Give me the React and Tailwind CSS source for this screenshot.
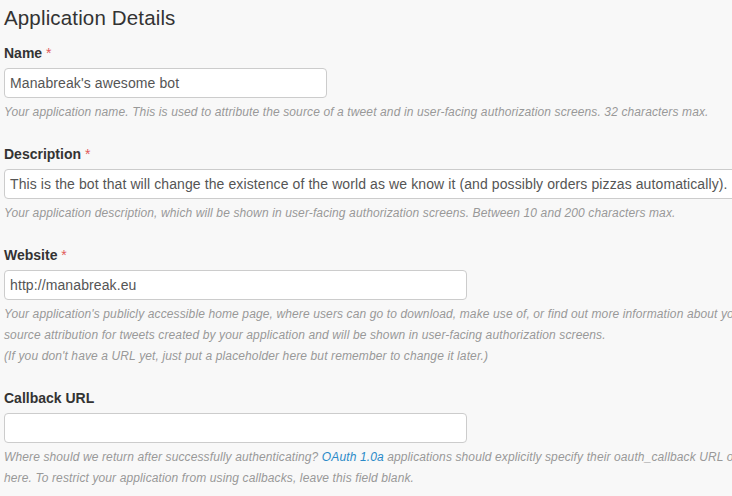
export default function App() {
  const font = { fontFamily: '"Liberation Sans", Arial, sans-serif' };
  const Label = ({ children, req }) => (
    <div className="text-[14px] leading-[20px] font-bold text-[#333] mb-[5px]">
      {children}
      {req && <span className="text-[#e05a5a] font-normal"> *</span>}
    </div>
  );
  const Input = ({ w, value }) => (
    <div
      className={`${w} h-[30px] shrink-0 bg-white border border-[#cccccc] rounded-[4px] px-[5px] flex items-center text-[14px] tracking-[0.1px] text-[#555] whitespace-nowrap overflow-hidden`}
    >
      {value}
    </div>
  );
  const Help = ({ children }) => (
    <div className="mt-[4px] text-[12px] leading-[21px] tracking-[0.12px] italic text-[#999] whitespace-nowrap">
      {children}
    </div>
  );
  return (
    <div
      style={font}
      className="w-[732px] h-[496px] overflow-hidden bg-[#f8f8f8] pl-[4px] pt-[6px] flex flex-col"
    >
      <h3 className="text-[20.5px] leading-[24px] tracking-[0.15px] text-[#333] font-normal mb-[13px]">
        Application Details
      </h3>

      <div className="flex flex-col mb-[21px]">
        <Label req>Name</Label>
        <Input w="w-[323px]" value="Manabreak's awesome bot" />
        <Help>
          Your application name. This is used to attribute the source of a tweet and in user-facing authorization screens. 32 characters max.
        </Help>
      </div>

      <div className="flex flex-col mb-[21px]">
        <Label req>Description</Label>
        <Input
          w="w-[780px]"
          value="This is the bot that will change the existence of the world as we know it (and possibly orders pizzas automatically)."
        />
        <Help>
          Your application description, which will be shown in user-facing authorization screens. Between 10 and 200 characters max.
        </Help>
      </div>

      <div className="flex flex-col mb-[21px]">
        <Label req>Website</Label>
        <Input w="w-[463px]" value="http://manabreak.eu" />
        <Help>
          <div>
            Your application's publicly accessible home page, where users can go to download, make use of, or find out more information about your application. This fully-qualified URL is used in the
          </div>
          <div>
            source attribution for tweets created by your application and will be shown in user-facing authorization screens.
          </div>
          <div>
            (If you don't have a URL yet, just put a placeholder here but remember to change it later.)
          </div>
        </Help>
      </div>

      <div className="flex flex-col">
        <Label>Callback URL</Label>
        <Input w="w-[463px]" value="" />
        <Help>
          <div>
            Where should we return after successfully authenticating?{" "}
            <span className="text-[#2a8ac8]">OAuth 1.0a</span> applications should explicitly specify their oauth_callback URL on the request token step, regardless of the value given
          </div>
          <div>
            here. To restrict your application from using callbacks, leave this field blank.
          </div>
        </Help>
      </div>
    </div>
  );
}
